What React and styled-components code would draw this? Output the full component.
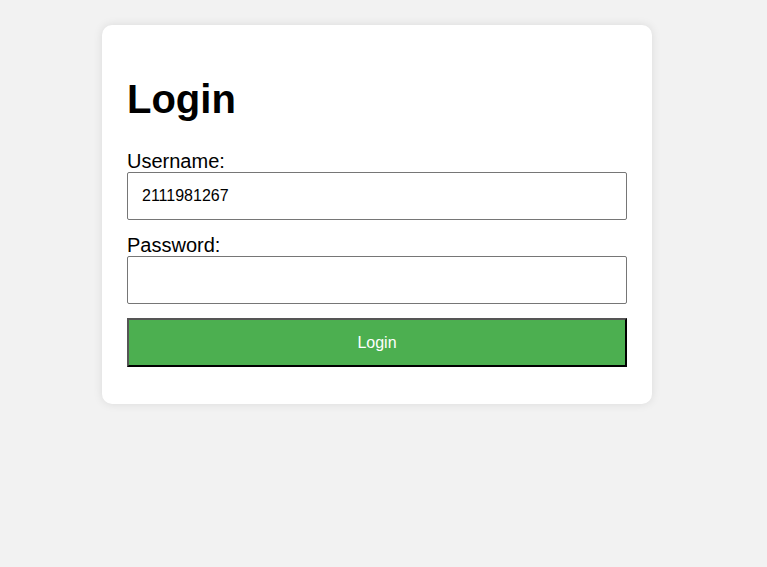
import React, { useState } from 'react';
import styled, { createGlobalStyle } from 'styled-components';

const GlobalStyle = createGlobalStyle`
  html, body {
    margin: 0;
    padding: 0;
    background-color: #f2f2f2;
    font-family: Arial, "Liberation Sans", sans-serif;
  }
`;

const Page = styled.div`
  min-height: 567px;
  padding: 25px 0 0 102px;
  box-sizing: border-box;
`;

const Card = styled.form`
  width: 550px;
  box-sizing: border-box;
  padding: 25px;
  background-color: #fff;
  border-radius: 10px;
  box-shadow: 0 0 10px rgba(0, 0, 0, 0.1);
`;

const Title = styled.h1`
  font-size: 40px;
  font-weight: bold;
  margin: 27px 0 28px;
  color: #000;
`;

const Label = styled.label`
  display: block;
  font-size: 20px;
  line-height: 22px;
  color: #000;
`;

const Input = styled.input`
  display: block;
  width: 100%;
  height: 48px;
  box-sizing: border-box;
  margin: 0 0 14px;
  padding: 0 14px;
  font-family: Arial, "Liberation Sans", sans-serif;
  font-size: 16px;
  color: #000;
  border: 1px solid #767676;
  border-radius: 2px;
  background: #fff;
  outline: none;
`;

const Button = styled.button`
  display: block;
  width: 100%;
  height: 49px;
  margin: 0 0 12px;
  box-sizing: border-box;
  background-color: #4caf50;
  color: #fff;
  font-family: Arial, "Liberation Sans", sans-serif;
  font-size: 16px;
  border-width: 2px;
  border-style: solid;
  border-color: #555 #000 #000 #555;
  cursor: pointer;
`;

export default function App() {
  const [username, setUsername] = useState('2111981267');
  const [password, setPassword] = useState('');

  return (
    <>
      <GlobalStyle />
      <Page>
        <Card onSubmit={(e) => e.preventDefault()}>
          <Title>Login</Title>
          <Label htmlFor="username">Username:</Label>
          <Input
            id="username"
            type="text"
            value={username}
            onChange={(e) => setUsername(e.target.value)}
          />
          <Label htmlFor="password">Password:</Label>
          <Input
            id="password"
            type="password"
            value={password}
            onChange={(e) => setPassword(e.target.value)}
          />
          <Button type="submit">Login</Button>
        </Card>
      </Page>
    </>
  );
}
